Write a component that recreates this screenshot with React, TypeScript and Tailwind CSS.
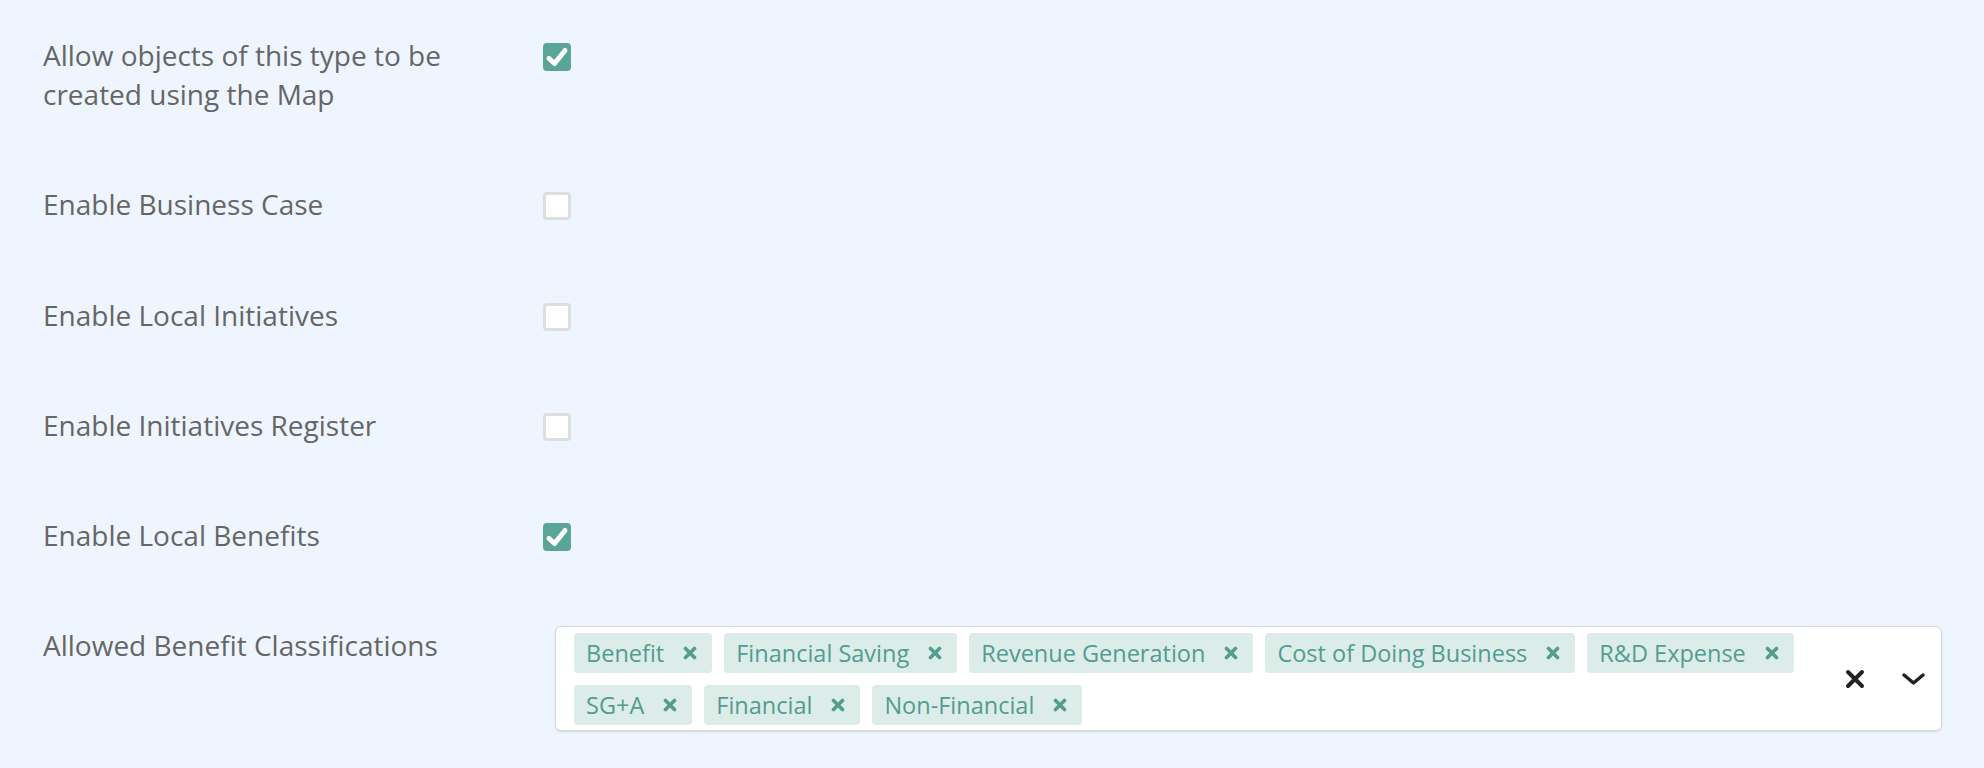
import React from 'react'

const classifications = [
  'Benefit',
  'Financial Saving',
  'Revenue Generation',
  'Cost of Doing Business',
  'R&D Expense',
  'SG+A',
  'Financial',
  'Non-Financial',
]

function Checkbox({ checked }: { checked: boolean }) {
  if (checked) {
    return (
      <div className="w-[28px] h-[28px] rounded-[4px] bg-[#5ba596] flex items-center justify-center">
        <svg width="28" height="28" viewBox="0 0 28 28">
          <path
            d="M6 15.5 L11.5 20.5 L22 7.5"
            fill="none"
            stroke="white"
            strokeWidth="5"
            strokeLinecap="round"
            strokeLinejoin="round"
          />
        </svg>
      </div>
    )
  }
  return <div className="w-[28px] h-[28px] rounded-[4px] bg-white border-[3px] border-[#dedede]" />
}

function Chip({ label }: { label: string }) {
  return (
    <div className="h-[40px] flex items-center rounded-[4px] bg-[#dcece9] text-[#529d8e] pl-3">
      <span className="text-[23.5px] leading-[40px]">{label}</span>
      <span className="pl-[19px] pr-[15px] flex items-center">
        <svg width="14" height="14" viewBox="0 0 14 14">
          <path d="M2.5 2.5 L11.5 11.5 M11.5 2.5 L2.5 11.5" stroke="#529d8e" strokeWidth="3.6" strokeLinecap="round" />
        </svg>
      </span>
    </div>
  )
}

function Row({ label, children }: { label: React.ReactNode; children: React.ReactNode }) {
  return (
    <div className="flex items-start">
      <div className="w-[500px] shrink-0 text-[28px] leading-[1.4] text-[#666666]">{label}</div>
      {children}
    </div>
  )
}

export default function App() {
  return (
    <div
      className="min-h-[768px] bg-[#eef5ff] pt-[36px] pl-[43px] pr-[42px]"
      style={{ fontFamily: '"Open Sans", "Liberation Sans", sans-serif' }}
    >
      <div className="flex flex-col gap-[71px]">
        <Row
          label={
            <>
              Allow objects of this type to be
              <br />
              created using the Map
            </>
          }
        >
          <div className="mt-[7px]">
            <Checkbox checked />
          </div>
        </Row>
        <Row label="Enable Business Case">
          <div className="mt-[7px]">
            <Checkbox checked={false} />
          </div>
        </Row>
        <Row label="Enable Local Initiatives">
          <div className="mt-[7px]">
            <Checkbox checked={false} />
          </div>
        </Row>
        <Row label="Enable Initiatives Register">
          <div className="mt-[7px]">
            <Checkbox checked={false} />
          </div>
        </Row>
        <Row label="Enable Local Benefits">
          <div className="mt-[7px]">
            <Checkbox checked />
          </div>
        </Row>
        <Row label="Allowed Benefit Classifications">
          <div className="ml-3 flex-1 flex bg-white border border-[#d9d9d9] rounded-[6px] shadow-[0_1px_2px_rgba(0,0,0,0.12)] pt-[6px] pb-[5px] pl-[18px]">
            <div className="flex-1 flex flex-wrap gap-3">
              {classifications.map((c) => (
                <Chip key={c} label={c} />
              ))}
            </div>
            <div className="flex items-center gap-[37px] pl-[15px] pr-4">
              <svg width="20" height="20" viewBox="0 0 20 20">
                <path d="M3 3 L17 17 M17 3 L3 17" stroke="#222222" strokeWidth="4" strokeLinecap="round" />
              </svg>
              <svg width="23" height="12" viewBox="0 0 23 12">
                <path
                  d="M2 2 L11.5 10 L21 2"
                  fill="none"
                  stroke="#222222"
                  strokeWidth="3.4"
                  strokeLinecap="round"
                  strokeLinejoin="round"
                />
              </svg>
            </div>
          </div>
        </Row>
      </div>
    </div>
  )
}
